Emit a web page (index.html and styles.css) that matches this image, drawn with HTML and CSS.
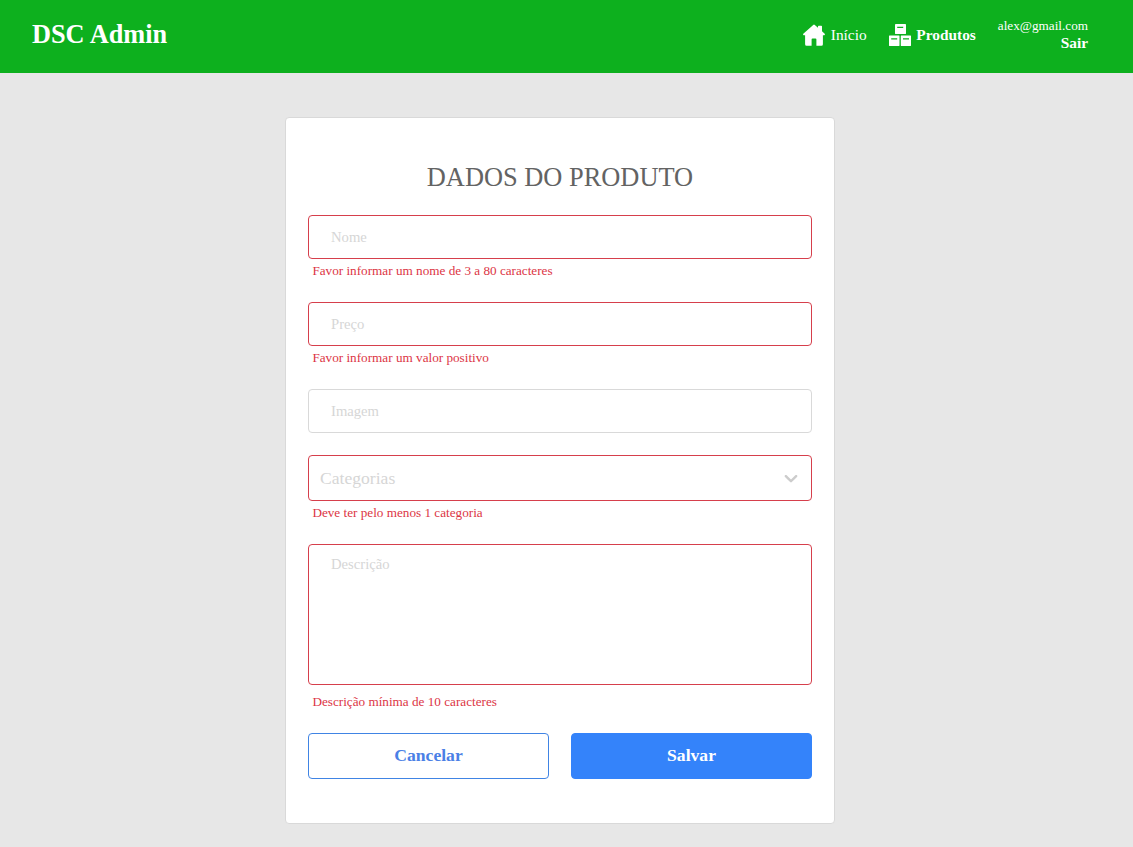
FILE: index.html
```html
<!DOCTYPE html>
<html lang="pt-BR">
<head>
<meta charset="UTF-8">
<title>DSC Admin</title>
<link rel="stylesheet" href="styles.css">
</head>
<body>
<header class="header">
  <h1 class="brand">DSC Admin</h1>
  <div class="header-right">
    <nav class="menu">
      <a class="menu-item home">
        <svg class="menu-icon" viewBox="0 0 22 22" fill="#fff"><path d="M10.2.9Q11 .3 11.8.9L15 3.7V2.4Q15 1.7 15.7 1.7H18.3Q19 1.7 19 2.4V7.2L21.7 9.7Q22.2 10.4 21.7 10.9Q21.3 11.3 20.7 11.3H19.9V20.2Q19.9 21.7 18.4 21.7H13.4V15.4Q13.4 14.5 12.5 14.5H9.5Q8.6 14.5 8.6 15.4V21.7H3.6Q2.1 21.7 2.1 20.2V11.3H1.3Q.7 11.3.3 10.9Q-.2 10.4.3 9.7Z"/></svg>
        <span>Início</span>
      </a>
      <a class="menu-item active">
        <svg class="menu-icon" viewBox="0 0 22 22"><g fill="#fff"><rect x="6" width="11" height="10" rx=".4"/><rect y="11.5" width="10.5" height="10.5" rx=".4"/><rect x="11.8" y="11.5" width="10.2" height="10.5" rx=".4"/></g><path d="M8.2 3.4h6M2.2 14.9h6M14 14.9h6" stroke="#0db01e" stroke-width="1.2"/></svg>
        <span>Produtos</span>
      </a>
    </nav>
    <div class="user">
      <span class="email">alex@gmail.com</span>
      <a class="logout">Sair</a>
    </div>
  </div>
</header>
<main class="main">
  <form class="card">
    <h2 class="title">Dados do produto</h2>
    <div class="field">
      <input class="control invalid" type="text" placeholder="Nome">
      <div class="error">Favor informar um nome de 3 a 80 caracteres</div>
    </div>
    <div class="field">
      <input class="control invalid" type="text" placeholder="Preço">
      <div class="error">Favor informar um valor positivo</div>
    </div>
    <div class="field field-plain">
      <input class="control" type="text" placeholder="Imagem">
    </div>
    <div class="field field-select">
      <div class="select invalid">
        <span>Categorias</span>
        <svg class="chevron" viewBox="0 0 20 20" fill="#ccc"><path d="M4.516 7.548c.436-.446 1.043-.481 1.576 0L10 11.295l3.908-3.747c.533-.481 1.141-.446 1.574 0 .436.445.408 1.197 0 1.615-.406.418-4.695 4.502-4.695 4.502a1.095 1.095 0 0 1-1.576 0S4.924 9.581 4.516 9.163s-.436-1.17 0-1.615z"/></svg>
      </div>
      <div class="error">Deve ter pelo menos 1 categoria</div>
    </div>
    <div class="field field-text">
      <textarea class="control textarea invalid" placeholder="Descrição"></textarea>
      <div class="error">Descrição mínima de 10 caracteres</div>
    </div>
    <div class="actions">
      <button class="btn btn-outline" type="button">Cancelar</button>
      <button class="btn btn-primary" type="button">Salvar</button>
    </div>
  </form>
</main>
</body>
</html>
```
FILE: styles.css
```css
* {
  box-sizing: border-box;
  margin: 0;
  padding: 0;
  font-family: "Liberation Serif", "Times New Roman", serif;
}
body {
  background: #e7e7e7;
  min-height: 847px;
}
.header {
  display: flex;
  justify-content: space-between;
  align-items: center;
  height: 73px;
  padding: 0 45px 0 32px;
  background: #0db01e;
  color: #fff;
}
.brand {
  font-size: 26.3px;
  line-height: 30px;
  padding-bottom: 3px;
}
.header-right {
  display: flex;
  align-items: center;
  gap: 22px;
  padding-bottom: 3px;
}
.menu {
  display: flex;
  gap: 22.6px;
}
.menu-item {
  display: flex;
  align-items: center;
  gap: 5px;
  font-size: 15.4px;
}
.home {
  gap: 5.7px;
}
.active {
  font-weight: bold;
}
.menu-icon {
  width: 22px;
  height: 22px;
}
.user {
  display: flex;
  flex-direction: column;
  align-items: flex-end;
}
.email {
  font-size: 13.2px;
  line-height: 16px;
}
.logout {
  font-size: 15.4px;
  line-height: 18px;
  font-weight: bold;
}
.main {
  padding: 44px 0 23px 285px;
}
.card {
  width: 550px;
  height: 707px;
  padding: 44px 22px;
  background: #fff;
  border: 1px solid #d9d9d9;
  border-radius: 4px;
}
.title {
  height: 53px;
  font-size: 26.4px;
  line-height: 30px;
  font-weight: normal;
  text-align: center;
  text-transform: uppercase;
  color: #636363;
}
.field {
  height: 87px;
}
.field-plain {
  height: 66px;
}
.field-select {
  height: 89px;
}
.field-text {
  height: 189px;
}
.control {
  display: block;
  width: 100%;
  height: 44px;
  padding: 0 22px;
  border: 1px solid #d9d9d9;
  border-radius: 4px;
  background: #fff;
  font-size: 14.67px;
  outline: none;
}
.control::placeholder {
  color: #d6d6d6;
}
.textarea {
  height: 141px;
  padding-top: 11px;
  resize: none;
}
.select {
  display: flex;
  align-items: center;
  justify-content: space-between;
  height: 46px;
  padding: 0 9px 0 11px;
  border: 1px solid;
  border-radius: 4px;
  font-size: 17.6px;
  color: #d6d6d6;
}
.chevron {
  width: 22px;
  height: 22px;
}
.invalid {
  border-color: #d63f4c;
}
.error {
  padding: 4px 4px 0 4.4px;
  font-size: 13.2px;
  line-height: 16px;
  color: #dc3545;
}
.field-text .error {
  padding-top: 9px;
}
.actions {
  display: grid;
  grid-template-columns: 1fr 1fr;
  gap: 22px;
}
.btn {
  height: 46px;
  padding-bottom: 2px;
  border: 1px solid #3483fa;
  border-radius: 4px;
  font-size: 17.6px;
  font-weight: bold;
}
.btn-outline {
  background: #fff;
  border-color: #4084e4;
  color: #4a80e6;
}
.btn-primary {
  background: #3483fa;
  color: #fff;
}
```
